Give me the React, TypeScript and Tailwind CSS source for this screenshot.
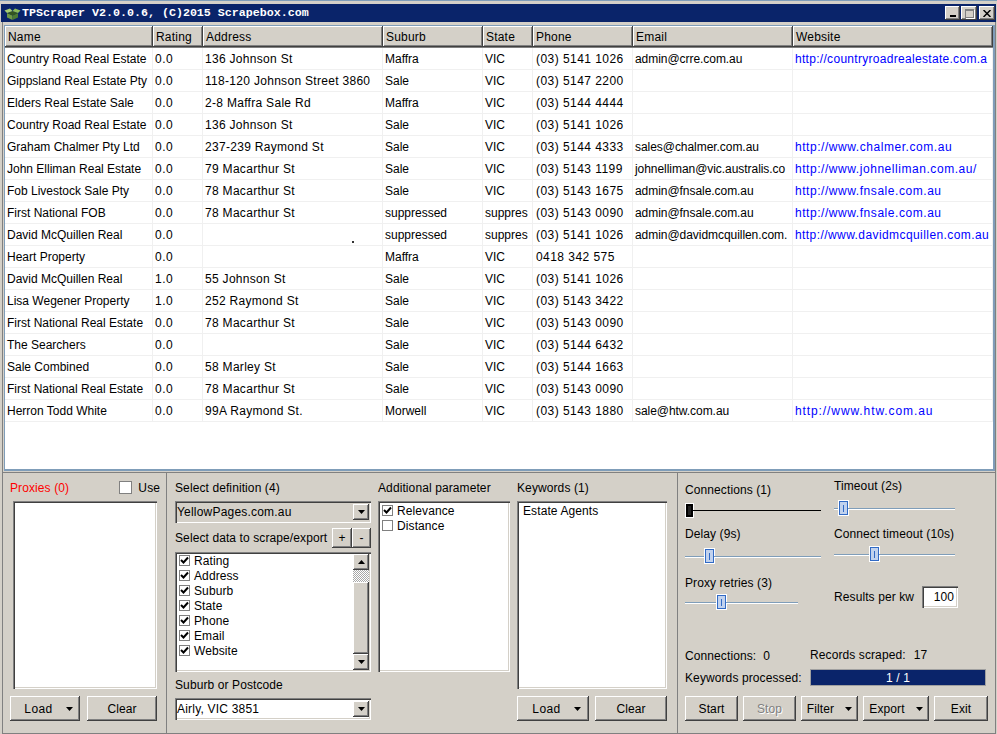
import type { ReactNode } from 'react';

const raised = 'bg-[#d4d0c8] shadow-[inset_-1px_-1px_#404040,inset_1px_1px_#ffffff,inset_-2px_-2px_#808080]';
const sunkenEdge = 'shadow-[inset_1px_1px_#808080,inset_2px_2px_#404040,inset_-1px_-1px_#ffffff,inset_-2px_-2px_#d4d0c8]';
const sunken = `bg-white ${sunkenEdge}`;
const sunkenGray = `bg-[#d4d0c8] ${sunkenEdge}`;

const columns = ['Name', 'Rating', 'Address', 'Suburb', 'State', 'Phone', 'Email', 'Website'];
const gridCols = 'grid grid-cols-[148px_50px_180px_100px_50px_100px_160px_200px]';

const rows = [
  ['Country Road Real Estate', '0.0', '136 Johnson St', 'Maffra', 'VIC', '(03) 5141 1026', 'admin@crre.com.au', 'http://countryroadrealestate.com.a'],
  ['Gippsland Real Estate Pty', '0.0', '118-120 Johnson Street 3860', 'Sale', 'VIC', '(03) 5147 2200', '', ''],
  ['Elders Real Estate Sale', '0.0', '2-8 Maffra Sale Rd', 'Maffra', 'VIC', '(03) 5144 4444', '', ''],
  ['Country Road Real Estate', '0.0', '136 Johnson St', 'Sale', 'VIC', '(03) 5141 1026', '', ''],
  ['Graham Chalmer Pty Ltd', '0.0', '237-239 Raymond St', 'Sale', 'VIC', '(03) 5144 4333', 'sales@chalmer.com.au', 'http://www.chalmer.com.au'],
  ['John Elliman Real Estate', '0.0', '79 Macarthur St', 'Sale', 'VIC', '(03) 5143 1199', 'johnelliman@vic.australis.co', 'http://www.johnelliman.com.au/'],
  ['Fob Livestock Sale Pty', '0.0', '78 Macarthur St', 'Sale', 'VIC', '(03) 5143 1675', 'admin@fnsale.com.au', 'http://www.fnsale.com.au'],
  ['First National FOB', '0.0', '78 Macarthur St', 'suppressed', 'suppres', '(03) 5143 0090', 'admin@fnsale.com.au', 'http://www.fnsale.com.au'],
  ['David McQuillen Real', '0.0', '', 'suppressed', 'suppres', '(03) 5141 1026', 'admin@davidmcquillen.com.', 'http://www.davidmcquillen.com.au'],
  ['Heart Property', '0.0', '', 'Maffra', 'VIC', '0418 342 575', '', ''],
  ['David McQuillen Real', '1.0', '55 Johnson St', 'Sale', 'VIC', '(03) 5141 1026', '', ''],
  ['Lisa Wegener Property', '1.0', '252 Raymond St', 'Sale', 'VIC', '(03) 5143 3422', '', ''],
  ['First National Real Estate', '0.0', '78 Macarthur St', 'Sale', 'VIC', '(03) 5143 0090', '', ''],
  ['The Searchers', '0.0', '', 'Sale', 'VIC', '(03) 5144 6432', '', ''],
  ['Sale Combined', '0.0', '58 Marley St', 'Sale', 'VIC', '(03) 5144 1663', '', ''],
  ['First National Real Estate', '0.0', '78 Macarthur St', 'Sale', 'VIC', '(03) 5143 0090', '', ''],
  ['Herron Todd White', '0.0', '99A Raymond St.', 'Morwell', 'VIC', '(03) 5143 1880', 'sale@htw.com.au', 'http://www.htw.com.au'],
];

// text in the reference runs a bit wider per column than Liberation Sans
const colClass = [
  '',
  'tracking-[0.5px]',
  'tracking-[0.3px]',
  '',
  '',
  'tracking-[0.45px] pl-[3px]',
  'tracking-[-0.05px]',
  'text-[#0000ff] tracking-[0.55px]',
];
const websiteTrack: Record<number, string> = {
  0: 'text-[#0000ff] tracking-[0.3px]',
  8: 'text-[#0000ff] tracking-[0.42px]',
  16: 'text-[#0000ff] tracking-[0.9px]',
};

const Caret = ({ className = '' }: { className?: string }) => (
  <svg width="7" height="4" viewBox="0 0 7 4" className={className}>
    <path d="M0 0h7L3.5 4z" fill="#000" />
  </svg>
);

const Btn = ({ label, w, caret, disabled, wide }: { label: string; w: string; caret?: boolean; disabled?: boolean; wide?: boolean }) => (
  <div
    className={`${raised} ${w} h-[25px] flex items-center justify-center shrink-0 ${wide ? 'gap-[13px] pl-[7px] tracking-[0.4px]' : 'gap-2'} ${disabled ? 'text-[#808080] [text-shadow:1px_1px_#ffffff]' : ''}`}
  >
    <span>{label}</span>
    {caret && <Caret className={wide ? '' : 'ml-[3px]'} />}
  </div>
);

const Check = ({ on = true, size = 'w-[11px] h-[11px]' }: { on?: boolean; size?: string }) => (
  <span className={`${size} bg-white border border-[#808080] flex items-center justify-center shrink-0`}>
    {on && (
      <svg width="9" height="9" viewBox="0 0 9 9">
        <path d="M1 4l2.5 2.5L8 1.5" fill="none" stroke="#000" strokeWidth="2" />
      </svg>
    )}
  </span>
);

const CheckRow = ({ label, on }: { label: string; on?: boolean }) => (
  <div className="h-[15px] flex items-center gap-[4px]">
    <Check on={on} />
    <span>{label}</span>
  </div>
);

const ArrowBtn = ({ up, className = '' }: { up?: boolean; className?: string }) => (
  <div className={`${raised} w-[16px] h-[16px] flex items-center justify-center shrink-0 ${className}`}>
    <Caret className={up ? 'rotate-180' : ''} />
  </div>
);

const Combo = ({ value, gray }: { value: string; gray?: boolean }) => (
  <div className={`${gray ? sunkenGray : sunken} h-[22px] flex items-center justify-between pl-[2px] pr-[2px]`}>
    <span className="tracking-[0.2px]">{value}</span>
    <ArrowBtn />
  </div>
);

const Slider = ({ w, pos, dark, mt }: { w: string; pos: string; dark?: boolean; mt: string }) => (
  <div className={`${w} ${mt} h-[14px] flex items-center`}>
    <div className={`${pos} shrink-0 h-[1px] ${dark ? 'bg-black' : 'bg-[#7f9db9] shadow-[0_1px_#ffffff]'}`} />
    {dark ? (
      <div className="w-[7px] h-[13px] bg-[#222222] border-2 border-black shadow-[0_0_0_1px_#ffffff] shrink-0 ml-[1px]" />
    ) : (
      <div className="w-[9px] h-[14px] bg-[#c1d2ee] border border-[#316ac5] shadow-[0_0_0_1px_#ffffff] flex items-center justify-center shrink-0">
        <div className="w-px h-[7px] bg-[#316ac5]" />
      </div>
    )}
    <div className={`flex-1 h-[1px] ${dark ? 'bg-black' : 'bg-[#7f9db9] shadow-[0_1px_#ffffff]'}`} />
  </div>
);

const Panel = ({ className, children }: { className: string; children: ReactNode }) => (
  <div className={`border-r border-[#808080] h-full ${className}`}>{children}</div>
);

export default function App() {
  return (
    <div className="w-[997px] h-[734px] overflow-hidden bg-[#d4d0c8] border-t border-[#7f9db9] flex flex-col text-black text-[12px] leading-[14px] font-['Liberation_Sans',sans-serif]">
      {/* Title bar */}
      <div className="mt-[3px] h-[18px] mx-[1px] bg-[#0a246a] flex items-center justify-between pl-[3px] pr-[1px] shrink-0">
        <div className="flex items-center gap-[1px]">
          <svg width="17" height="15" viewBox="0 0 17 15">
            <path d="M3 7l5.5 2.5V14L3 11.5z" fill="#6f9a45" />
            <path d="M14 7L8.5 9.5V14l5.5-2.5z" fill="#4c7a33" />
            <path d="M3 7l5.5-2L14 7 8.5 9.5z" fill="#33561f" />
            <path d="M3 7L0.5 4.5 6 2.5 8.5 5z" fill="#a9cf72" />
            <path d="M14 7l2.5-2.5L11 2.5 8.5 5z" fill="#8dbb5a" />
          </svg>
          <span className="text-white font-bold font-['Liberation_Mono',monospace] text-[11.67px]">TPScraper V2.0.0.6, (C)2015 Scrapebox.com</span>
        </div>
        <div className="flex items-center">
          <div className={`${raised} w-[15px] h-[14px] flex items-end justify-center pb-[3px]`}>
            <div className="w-[6px] h-[2px] bg-black" />
          </div>
          <div className={`${raised} w-[16px] h-[14px] ml-[1px] flex items-center justify-center`}>
            <div className="w-[9px] h-[9px] border border-[#808080] border-t-2 shadow-[1px_1px_#ffffff]" />
          </div>
          <div className={`${raised} w-[16px] h-[14px] ml-[2px] flex items-center justify-center`}>
            <svg width="8" height="7" viewBox="0 0 8 7">
              <path d="M0.5 0L7.5 7M7.5 0L0.5 7" stroke="#000" strokeWidth="1.5" />
            </svg>
          </div>
        </div>
      </div>

      <div className="ml-[2px] w-[994px] flex-1 flex flex-col border-x border-[#808080]">
        {/* Results table */}
        <div className="mt-[3px] ml-[1px] h-[446px] w-[991px] shrink-0 bg-white border border-r-2 border-b-2 border-[#7f9db9] overflow-hidden">
          <div className={`${gridCols} h-[22px] bg-[#808080]`}>
            {columns.map((c) => (
              <div key={c} className={`${raised} h-[21px] px-[3px] flex items-center tracking-[0.2px]`}>
                {c}
              </div>
            ))}
          </div>
          {rows.map((row, i) => (
            <div key={i} className={`${gridCols} h-[22px]`}>
              {row.map((cell, j) => (
                <div
                  key={j}
                  className={`px-[2px] flex items-center overflow-hidden whitespace-nowrap border-r border-b border-[#f0f0f0] ${j === 7 && websiteTrack[i] ? websiteTrack[i] : colClass[j]}`}
                >
                  {cell}
                  {/* stray pixel that sits in this empty cell in the capture */}
                  {i === 8 && j === 2 && <span className="ml-[147px] mt-[14px] w-[2px] h-[2px] bg-[#333333]" />}
                </div>
              ))}
            </div>
          ))}
        </div>

        {/* Bottom panels */}
        <div className="mt-[1px] flex-1 flex border-y border-[#808080] tracking-[0.1px]">
          {/* Proxies */}
          <Panel className="w-[164px] shrink-0 pl-[7px] pr-[6px]">
            <div className="h-[28px] pt-[1px] flex items-center justify-between">
              <span className="text-[#ff0000]">Proxies (0)</span>
              <div className="flex items-center gap-[6px]">
                <Check on={false} size="w-[13px] h-[13px]" />
                <span>Use</span>
              </div>
            </div>
            <div className={`${sunken} ml-[3px] w-[144px] h-[188px]`} />
            <div className="mt-[7px] flex gap-[7px]">
              <Btn label="Load" w="w-[70px]" caret wide />
              <Btn label="Clear" w="w-[70px]" />
            </div>
          </Panel>

          {/* Definition, parameters and keywords */}
          <Panel className="w-[511px] shrink-0 pl-[8px] flex gap-[7px]">
            <div className="w-[196px] shrink-0">
              <div className="h-[28px] pt-[1px] flex items-center">Select definition (4)</div>
              <Combo value="YellowPages.com.au" gray />
              <div className="mt-[5px] h-[19px] flex items-center justify-between">
                <span>Select data to scrape/export</span>
                <div className="flex">
                  <div className={`${raised} w-[20px] h-[20px] flex items-center justify-center`}>+</div>
                  <div className={`${raised} w-[19px] h-[20px] flex items-center justify-center`}>-</div>
                </div>
              </div>
              <div className={`${sunken} mt-[5px] h-[120px] flex justify-between px-[2px] pt-[1px] pb-[2px]`}>
                <div className="pl-[2px]">
                  {['Rating', 'Address', 'Suburb', 'State', 'Phone', 'Email', 'Website'].map((l) => (
                    <CheckRow key={l} label={l} on />
                  ))}
                </div>
                <div className="w-[16px] mt-[1px] flex flex-col">
                  <ArrowBtn up />
                  <div className="h-[12px] bg-[repeating-conic-gradient(#a8a8a8_0_25%,#ffffff_0_50%)] bg-[length:2px_2px]" />
                  <div className={`${raised} flex-1`} />
                  <ArrowBtn />
                </div>
              </div>
              <div className="mt-[5px] h-[16px] flex items-center">Suburb or Postcode</div>
              <div className="mt-[5px]">
                <Combo value="Airly, VIC 3851" />
              </div>
            </div>

            <div className="w-[132px] shrink-0">
              <div className="h-[28px] pt-[1px] flex items-center">Additional parameter</div>
              <div className={`${sunken} h-[171px] pl-[4px] pt-[2px]`}>
                <CheckRow label="Relevance" on />
                <CheckRow label="Distance" on={false} />
              </div>
            </div>

            <div className="w-[150px] shrink-0">
              <div className="h-[28px] pt-[1px] flex items-center">Keywords (1)</div>
              <div className={`${sunken} h-[188px] pl-[6px] pt-[3px]`}>Estate Agents</div>
              <div className="mt-[7px] flex gap-[6px]">
                <Btn label="Load" w="w-[72px]" caret wide />
                <Btn label="Clear" w="w-[72px]" />
              </div>
            </div>
          </Panel>

          {/* Scrape settings and progress */}
          <div className="flex-1 pl-[7px] flex flex-col">
            <div className="h-[166px] flex gap-[13px] shrink-0">
              <div className="w-[136px] shrink-0 pt-[10px]">
                <div>Connections (1)</div>
                <Slider w="w-[136px]" pos="w-0" dark mt="mt-[6px]" />
                <div className="mt-[10px]">Delay (9s)</div>
                <Slider w="w-[136px]" pos="w-[20px]" mt="mt-[8px]" />
                <div className="mt-[13px]">Proxy retries (3)</div>
                <Slider w="w-[113px]" pos="w-[32px]" mt="mt-[5px]" />
              </div>
              <div className="w-[124px] shrink-0 pt-[6px]">
                <div>Timeout (2s)</div>
                <Slider w="w-[121px]" pos="w-[5px]" mt="mt-[8px]" />
                <div className="mt-[12px]">Connect timeout (10s)</div>
                <Slider w="w-[121px]" pos="w-[36px]" mt="mt-[6px]" />
                <div className="mt-[25px] flex items-center justify-between">
                  <span>Results per kw</span>
                  <div className={`${sunken} w-[36px] h-[22px] flex items-center justify-end pr-[4px]`}>100</div>
                </div>
              </div>
            </div>
            <div className="mt-[10px] flex">
              <div className="w-[125px] shrink-0 flex gap-[7px]">
                <span>Connections:</span>
                <span>0</span>
              </div>
              <div className="flex gap-[8px] -mt-[1px]">
                <span>Records scraped:</span>
                <span>17</span>
              </div>
            </div>
            <div className="mt-[6px] h-[17px] flex items-center">
              <span className="w-[125px] shrink-0">Keywords processed:</span>
              <div className="w-[176px] h-[17px] bg-[#0a246a] border border-[#a0a0a0] text-white flex items-center justify-center">1 / 1</div>
            </div>
            <div className="mt-[10px] flex gap-[5px]">
              <Btn label="Start" w="w-[53px]" />
              <Btn label="Stop" w="w-[53px]" disabled />
              <Btn label="Filter" w="w-[57px]" caret />
              <Btn label="Export" w="w-[66px]" caret />
              <Btn label="Exit" w="w-[54px]" />
            </div>
          </div>
        </div>
      </div>
    </div>
  );
}
